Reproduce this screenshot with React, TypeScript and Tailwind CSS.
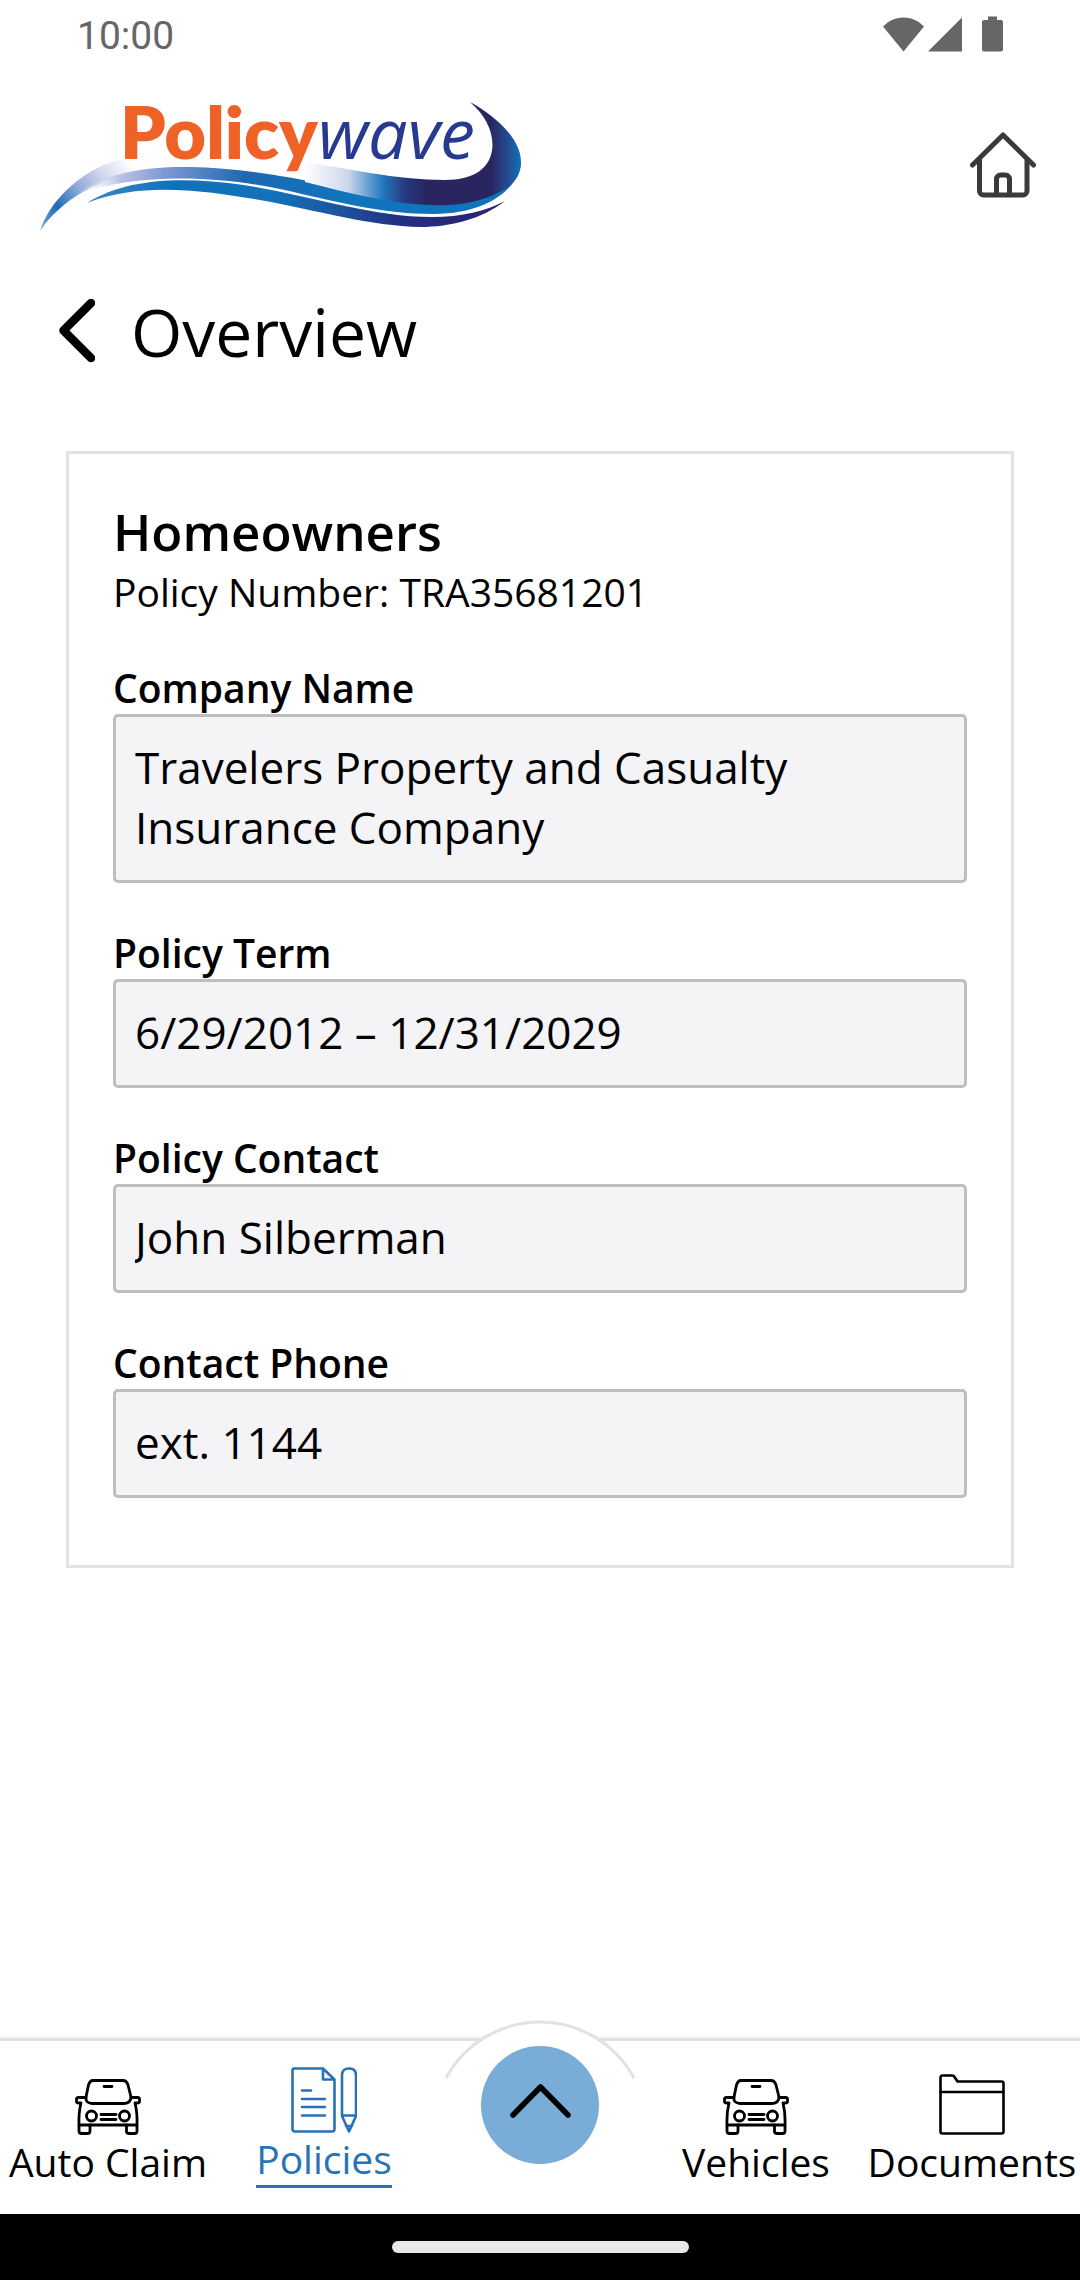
import React from 'react';

interface PolicyField {
    id: string;
    label: string;
    value: string;
    rows?: number;
}

const fields: PolicyField[] = [
    { id: 'company-name', label: 'Company Name', value: 'Travelers Property and Casualty Insurance Company', rows: 2 },
    { id: 'policy-term', label: 'Policy Term', value: '6/29/2012 – 12/31/2029' },
    { id: 'policy-contact', label: 'Policy Contact', value: 'John Silberman' },
    { id: 'contact-phone', label: 'Contact Phone', value: 'ext. 1144' },
];

const StatusBar = () => (
    <div className="flex h-[72px] items-center justify-between pl-[77px] pr-[76px] text-[#666666]">
        <span className="font-[Roboto,sans-serif] text-[39px] leading-[46px]">10:00</span>
        <svg className="mb-1 h-[36px] w-[122px]" viewBox="882 16 122 36" fill="currentColor" aria-hidden="true">
            <path d="M903.500 51.500L883 26.500C889 20.500 896 17.500 903.500 17.500S918 20.500 924 26.500Z" />
            <path d="M962 17.500V51.500H928Z" />
            <path d="M988 16.500h9v3.500h4a2 2 0 0 1 2 2v27.500a2 2 0 0 1-2 2h-17a2 2 0 0 1-2-2V22a2 2 0 0 1 2-2h4Z" />
        </svg>
    </div>
);

const Logo = () => (
    <svg className="h-[152px] w-[484px]" viewBox="40 80 484 152" role="img" aria-label="Policywave">
        <defs>
            <linearGradient id="wing" gradientUnits="userSpaceOnUse" x1="40" y1="231" x2="128" y2="160">
                <stop offset="0" stopColor="#7fb2dc" />
                <stop offset="0.25" stopColor="#1b6bb4" />
                <stop offset="0.5" stopColor="#8fa9da" />
                <stop offset="0.75" stopColor="#d3d8ee" />
                <stop offset="1" stopColor="#ffffff" />
            </linearGradient>
            <linearGradient id="band" gradientUnits="userSpaceOnUse" x1="75" y1="0" x2="521" y2="0">
                <stop offset="0" stopColor="#ffffff" stopOpacity="0" />
                <stop offset="0.1" stopColor="#bcc3e4" />
                <stop offset="0.2" stopColor="#7f98d2" />
                <stop offset="0.38" stopColor="#1e68b2" />
                <stop offset="0.6" stopColor="#0f75bc" />
                <stop offset="1" stopColor="#1072ba" />
            </linearGradient>
            <linearGradient id="under" gradientUnits="userSpaceOnUse" x1="87" y1="0" x2="505" y2="0">
                <stop offset="0" stopColor="#3f87c6" />
                <stop offset="0.2" stopColor="#0f72ba" />
                <stop offset="0.45" stopColor="#1272ba" />
                <stop offset="0.62" stopColor="#1f4f9c" />
                <stop offset="0.75" stopColor="#222f80" />
                <stop offset="1" stopColor="#2b2270" />
            </linearGradient>
            <linearGradient id="ribbon" gradientUnits="userSpaceOnUse" x1="305" y1="0" x2="521" y2="0">
                <stop offset="0" stopColor="#ffffff" />
                <stop offset="0.2" stopColor="#ccd6ec" />
                <stop offset="0.36" stopColor="#2079bd" />
                <stop offset="0.46" stopColor="#273a82" />
                <stop offset="0.56" stopColor="#29255f" />
                <stop offset="0.86" stopColor="#29255f" />
                <stop offset="0.94" stopColor="#234d91" />
                <stop offset="1" stopColor="#1072ba" />
            </linearGradient>
        </defs>
        <path fill="url(#wing)" d="M40 231C50 199 86 165 128 158L150 169C114 176 68 190 40 231Z" />
        <path fill="url(#band)" d="M75 195C105 171 155 166 190 167C256 168 330 185 380 197C440 210 500 204 521 160C521 186 490 214 434 214C380 214 330 200 280 189C222 177 140 171 75 195Z" />
        <path fill="url(#under)" d="M87 203C130 176 190 178 240 184.500C310 195 370 217 432 217C462 217 486 211 505 201C482 219 450 227 421 227C370 226 320 211 260 200C200 190 142 182 87 203Z" />
        <path fill="url(#ribbon)" d="M305 162C345 168 396 180 445 180C474 180 492 168 492.500 145C492.500 130 485 115 470 102C494 115 521 138 521 162C521 176 514 183 505 189C482 203 456 206 432 205C390 204 345 192 305 182Z" />
        <text x="120" y="159" fontSize="72" fontWeight="800" fill="#ef6227" className="font-[Lato,sans-serif]">Policy</text>
        <text x="318" y="159" fontSize="70" fontStyle="italic" fill="#253a90" className="font-[Open_Sans,sans-serif]">wave</text>
    </svg>
);

const HomeIcon = () => (
    <svg className="h-[66px] w-[66px]" viewBox="0 0 66 66" fill="none" stroke="#3a3a3a" strokeWidth="5" strokeLinecap="round" strokeLinejoin="round" aria-hidden="true">
        <path d="M2.500 33L33 3L63.500 33" />
        <path d="M9.500 28V59a4 4 0 0 0 4 4H53a4 4 0 0 0 4-4V28" />
        <path d="M26.500 62V47a4 4 0 0 1 4-4H35.500a4 4 0 0 1 4 4V62" />
    </svg>
);

const CarIcon = () => (
    <svg className="h-[56px] w-[66px]" viewBox="0 0 66 56" fill="none" stroke="currentColor" strokeWidth="2.800" strokeLinecap="round" strokeLinejoin="round" aria-hidden="true">
        <path d="M18 1.500H48Q51.500 1.500 53 6L56 18Q56 24 49 24.500H17Q10 24 11 18L13.500 6Q15 1.500 18 1.500Z" />
        <path d="M29 7.500H37" />
        <path d="M11 18.500H3.500Q1.500 18.500 1.500 20V22.500Q1.500 24 4 24H6Q3.500 34 4 46H62Q62.500 34 60 24H62Q64.500 24 64.500 22.500V20Q64.500 18.500 62.500 18.500H56" />
        <circle cx="16.500" cy="37" r="5" />
        <circle cx="49.500" cy="37" r="5" />
        <path d="M26 35.500H41M26 40.500H41" />
        <path d="M4 46V52Q4 54.500 6.500 54.500H12.500Q15 54.500 15 52V46M51.500 46V52Q51.500 54.500 54 54.500H59.500Q62 54.500 62 52V46" />
    </svg>
);

const PoliciesIcon = () => (
    <svg className="h-[66px] w-[66px]" viewBox="0 0 66 66" fill="none" stroke="currentColor" strokeWidth="2.600" strokeLinecap="round" strokeLinejoin="round" aria-hidden="true">
        <path d="M32 1.500H3Q1.500 1.500 1.500 3.500V62Q1.500 64.500 4 64.500H41Q43.500 64.500 43.500 62V12.500L32 1.500V12.500H43" />
        <path d="M11 23.500H20M11 32H34M11 40H34M11 48.500H34" />
        <path d="M51 8Q51 1.500 58 1.500T65 8V49L58 64.500L51 49ZM51 48.500H65M55 59H61" />
    </svg>
);

const FolderIcon = () => (
    <svg className="h-[61px] w-[66px]" viewBox="0 0 66 61" fill="none" stroke="currentColor" strokeWidth="2.600" strokeLinecap="round" strokeLinejoin="round" aria-hidden="true">
        <path d="M1.500 4Q1.500 1.500 3.500 1.500H13Q15 1.500 15.500 3L18.500 7.500H62.500Q64.500 7.500 64.500 9.500V57.500Q64.500 59.500 62.500 59.500H3.500Q1.500 59.500 1.500 57.500Z" />
        <path d="M1.500 18H64" />
    </svg>
);

interface NavItemProps {
    label: string;
    icon: React.ReactNode;
    active?: boolean;
}

const NavItem: React.FC<NavItemProps> = ({ label, icon, active = false }) => (
    <a
        href="#"
        aria-current={active ? 'page' : undefined}
        className={`flex flex-col items-center ${active ? 'text-[#2873b8]' : 'text-black'}`}
    >
        {icon}
        <span className={`whitespace-nowrap text-[39px] ${active ? 'border-b-3 border-[#2873b8] leading-[52px]' : 'leading-[53px]'}`}>
            {label}
        </span>
    </a>
);

const Field: React.FC<{ field: PolicyField }> = ({ field }) => {
    const boxClass =
        'block w-full resize-none overflow-hidden rounded-[5px] border-3 border-[#bebebe] bg-[#f4f4f6] px-[19px] pb-[23px] pt-[20px] text-[44px] leading-[60px] text-black outline-none';

    return (
        <div>
            <label htmlFor={field.id} className="block text-[39px] font-semibold leading-[53px]">
                {field.label}
            </label>
            {field.rows ? (
                <textarea id={field.id} rows={field.rows} readOnly value={field.value} className={boxClass} />
            ) : (
                <input id={field.id} type="text" readOnly value={field.value} className={boxClass} />
            )}
        </div>
    );
};

const App: React.FC = () => {
    return (
        <div className="flex min-h-screen flex-col bg-white font-[Open_Sans,Noto_Sans,sans-serif] text-black">
            <StatusBar />

            <header className="flex items-end justify-between pl-10 pr-11 pt-2">
                <Logo />
                <button type="button" aria-label="Home" className="mb-[34px]">
                    <HomeIcon />
                </button>
            </header>

            <main className="flex-1">
                <div className="flex items-center gap-9 pl-[59px] pt-[53px]">
                    <button type="button" aria-label="Back">
                        <svg className="h-16 w-9" viewBox="0 0 36 64" fill="none" stroke="currentColor" strokeWidth="8.500" strokeLinecap="round" strokeLinejoin="round" aria-hidden="true">
                            <path d="M32 4L4.500 31.500L32 59" />
                        </svg>
                    </button>
                    <h1 className="text-[66px] leading-[92px]">Overview</h1>
                </div>

                <section className="mx-[66px] mt-[74px] border-3 border-[#e2e2e2] px-11 pb-[67px] pt-[44px]">
                    <h2 className="text-[51px] font-semibold leading-[67px]">Homeowners</h2>
                    <p className="text-[39px] leading-[53px]">Policy Number: TRA35681201</p>
                    <div className="mt-[43px] flex flex-col gap-[43px]">
                        {fields.map((field) => (
                            <Field key={field.id} field={field} />
                        ))}
                    </div>
                </section>
            </main>

            <nav className="relative grid h-[176px] grid-cols-5 items-end border-t-3 border-[#e2e2e2] bg-white pb-[26px] shadow-[0_-1px_3px_rgba(0,0,0,0.08)]">
                <NavItem label="Auto Claim" icon={<CarIcon />} />
                <NavItem label="Policies" icon={<PoliciesIcon />} active />
                <div className="flex justify-center pb-6">
                    {/* hump that rises over the bar's top border */}
                    <svg className="absolute -top-[22px] left-1/2 h-[60px] w-[192px] -translate-x-1/2" viewBox="0 0 192 60" fill="#ffffff" stroke="#e2e2e2" strokeWidth="3" aria-hidden="true">
                        <path d="M2 59A107 107 0 0 1 190 59" />
                    </svg>
                    <button type="button" aria-label="More" className="relative flex size-[118px] items-center justify-center rounded-full bg-[#79acd7]">
                        <svg className="mb-2 h-[34px] w-[61px]" viewBox="0 0 61 34" fill="none" stroke="currentColor" strokeWidth="5.500" strokeLinecap="round" strokeLinejoin="round" aria-hidden="true">
                            <path d="M3 31L30.500 3L58 31" />
                        </svg>
                    </button>
                </div>
                <NavItem label="Vehicles" icon={<CarIcon />} />
                <NavItem label="Documents" icon={<FolderIcon />} />
            </nav>

            <div className="flex h-[66px] items-center justify-center bg-black">
                <div className="h-3 w-[297px] rounded-full bg-[#e8e8e8]" />
            </div>
        </div>
    );
};

export default App;
